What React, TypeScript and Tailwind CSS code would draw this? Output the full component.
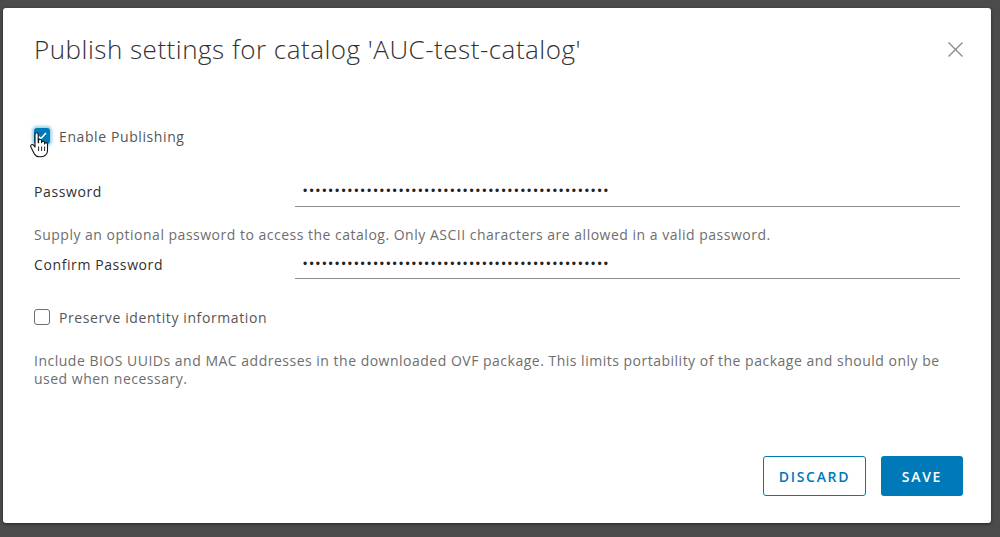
import React from "react";

const font = { fontFamily: '"Open Sans", "Liberation Sans", sans-serif' };

function Dots() {
  return (
    <span className="text-[12px] tracking-[2.2px] text-[#222]" style={{ fontFamily: '"Liberation Sans", sans-serif' }}>
      {"•".repeat(48)}
    </span>
  );
}

function HandCursor() {
  return (
    <svg width="22" height="28" viewBox="0 0 22 26" className="absolute left-[-5px] top-[3px]">
      <path
        d="M6 2.5c0-1 .7-1.7 1.6-1.7s1.6.7 1.6 1.7v8.2l.4-.1V8.8c0-.9.7-1.5 1.5-1.5s1.5.6 1.5 1.5v1.8c0-.8.7-1.4 1.5-1.4s1.5.6 1.5 1.4v1.3c0-.8.6-1.3 1.4-1.3s1.5.6 1.5 1.4v6.4c0 3.6-2.6 6.3-6.2 6.3H10c-2 0-3.4-.9-4.6-2.6L2 15.2c-.6-.8-.4-1.8.3-2.3.7-.5 1.6-.4 2.2.3L6 15V2.5z"
        fill="#fff"
        stroke="#111"
        strokeWidth="1.1"
        strokeLinejoin="round"
      />
      <path d="M9.6 14.5v4.5M12.6 14.5v4.5M15.6 14.5v4.5" stroke="#111" strokeWidth="0.9" />
    </svg>
  );
}

export default function App() {
  return (
    <div className="h-[537px] w-[1000px] bg-[#4b4b4b] pt-[8px] pl-[3px] pr-[9px] pb-[14px]" style={font}>
      <div className="h-full bg-white rounded-[3px] shadow-[0_1px_3px_rgba(0,0,0,0.5)] flex flex-col pl-[31px] pr-[31px] pt-[24px] pb-[27px]">
        <div className="flex items-start justify-between">
          <h1 className="text-[26px] font-light leading-[34px] tracking-[0.5px] text-[#313131]">
            Publish settings for catalog 'AUC-test-catalog'
          </h1>
          <button className="mt-[9px] mr-[-4px] text-[#8c8c8c]">
            <svg width="17" height="17" viewBox="0 0 17 17">
              <path d="M1.5 1.5l14 14M15.5 1.5l-14 14" stroke="#8a8a8a" strokeWidth="1.4" />
            </svg>
          </button>
        </div>

        <div className="mt-[60px] flex items-center gap-[9px] h-[20px]">
          <div className="relative w-[16px] h-[16px]">
            <div className="w-[16px] h-[16px] rounded-[3px] bg-[#0079b8] shadow-[0_0_3px_2px_rgba(73,175,217,0.55)] flex items-center justify-center">
              <svg width="10" height="8" viewBox="0 0 10 8">
                <path d="M1 4l2.8 2.6L9 1" stroke="#fff" strokeWidth="1.6" fill="none" />
              </svg>
            </div>
            <HandCursor />
          </div>
          <span className="text-[14px] tracking-[0.6px] text-[#565656]">Enable Publishing</span>
        </div>

        <div className="mt-[30px] flex items-center h-[31px]">
          <label className="w-[261px] text-[14px] tracking-[0.6px] text-[#313131]">Password</label>
          <div className="flex-1 self-stretch border-b border-[#8c8c8c] pl-[8px] flex items-center">
            <Dots />
          </div>
        </div>
        <p className="mt-[19px] text-[14px] tracking-[0.5px] text-[#6e6e6e] leading-[18px]">
          Supply an optional password to access the catalog. Only ASCII characters are allowed in a valid password.
        </p>

        <div className="mt-[6px] flex items-center h-[29px]">
          <label className="w-[261px] text-[14px] tracking-[0.6px] text-[#313131]">Confirm Password</label>
          <div className="flex-1 self-stretch border-b border-[#8c8c8c] pl-[8px] flex items-center">
            <Dots />
          </div>
        </div>

        <div className="mt-[28px] flex items-center gap-[9px] h-[20px]">
          <div className="w-[16px] h-[16px] rounded-[3px] border border-[#6f6f6f] bg-white" />
          <span className="text-[14px] tracking-[0.6px] text-[#565656]">Preserve identity information</span>
        </div>

        <p className="mt-[25px] text-[14px] tracking-[0.5px] text-[#6e6e6e] leading-[18px] pr-[20px]">
          Include BIOS UUIDs and MAC addresses in the downloaded OVF package. This limits portability of the package and should only be used when necessary.
        </p>

        <div className="mt-auto flex justify-end gap-[15px] mr-[-3px]">
          <button className="h-[40px] w-[103px] rounded-[3px] border border-[#0079b8] text-[#0079b8] text-[14px] font-semibold tracking-[1.7px]">
            DISCARD
          </button>
          <button className="h-[40px] w-[82px] rounded-[3px] bg-[#0079b8] text-white text-[14px] font-semibold tracking-[1.7px]">
            SAVE
          </button>
        </div>
      </div>
    </div>
  );
}
